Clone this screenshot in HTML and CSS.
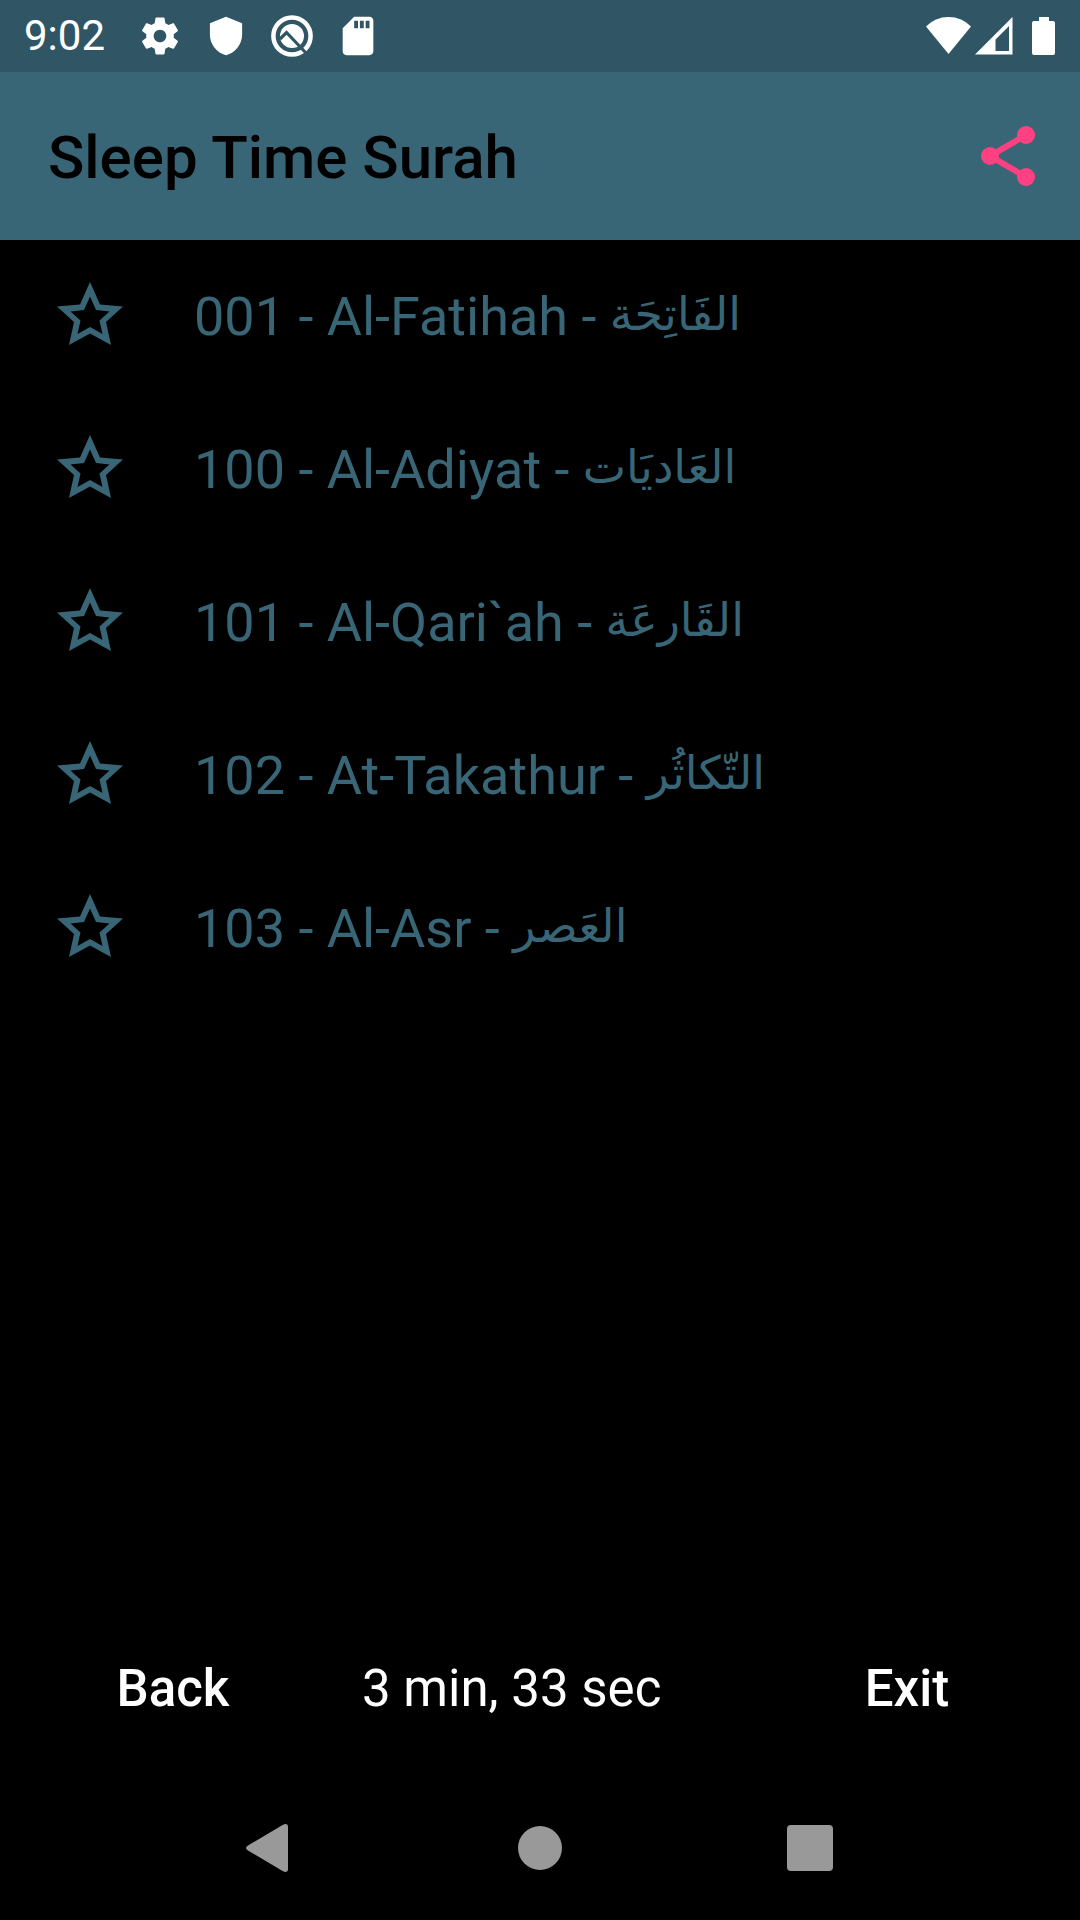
FILE: index.html
```html
<!DOCTYPE html>
<html lang="en">
<head>
<meta charset="utf-8">
<meta name="viewport" content="width=device-width, initial-scale=1">
<title>Sleep Time Surah</title>
<link rel="stylesheet" href="styles.css">
</head>
<body>
<svg class="defs" aria-hidden="true">
  <symbol id="star" viewBox="0 0 66 66"><path fill-rule="evenodd" d="M33 1L43 23.500L66 25.500L49 41L54 64L33 52.500L12 64L17 41L0 25.500L23 23.500ZM33 15.500L27 29L13.500 30.500L23.500 39.500L20.500 53L33 46L45.500 53L42.500 39.500L52.500 30.500L39 29Z"/></symbol>
</svg>
<div class="status">
  <span class="clock">9:02</span>
  <div class="notices">
    <svg viewBox="0 0 24 24"><path d="M19.140 12.940c.04-.3.06-.61.06-.94 0-.32-.02-.64-.07-.94l2.030-1.580c.18-.14.23-.41.12-.61l-1.920-3.320c-.12-.22-.37-.29-.59-.22l-2.390.96c-.5-.38-1.030-.7-1.620-.94l-.36-2.540c-.04-.24-.24-.41-.48-.41h-3.840c-.24 0-.43.17-.47.41l-.36 2.540c-.59.24-1.130.57-1.620.94l-2.390-.96c-.22-.08-.47 0-.59.22L2.740 8.870c-.12.21-.08.47.12.61l2.030 1.580c-.05.3-.09.63-.09.94s.02.64.07.94l-2.030 1.580c-.18.14-.23.41-.12.61l1.920 3.320c.12.22.37.29.59.22l2.390-.96c.5.38 1.030.7 1.620.94l.36 2.540c.05.24.24.41.48.41h3.840c.24 0 .44-.17.47-.41l.36-2.540c.59-.24 1.130-.56 1.620-.94l2.390.96c.22.08.47 0 .59-.22l1.920-3.320c.12-.22.07-.47-.12-.61l-2.010-1.580zM12 15.300c-1.820 0-3.300-1.480-3.300-3.300s1.480-3.300 3.300-3.300 3.300 1.480 3.300 3.300-1.480 3.300-3.300 3.300z"/></svg>
    <svg viewBox="0 0 24 24"><path d="M12 2L3.600 5.300v6c0 5 3.600 9.500 8.400 10.700 4.800-1.200 8.400-5.700 8.400-10.700v-6z"/></svg>
    <svg viewBox="0 0 46 46"><circle cx="23" cy="23" r="18.600" fill="none" stroke="#fff" stroke-width="4.500"/><circle cx="23" cy="23" r="12"/><path d="M11 26l6.500-6.500L37 40" fill="none" stroke="#305666" stroke-width="3.200"/></svg>
    <svg viewBox="0 0 24 24"><path d="M18 2h-8L4.020 8 4 20c0 1.100.9 2 2 2h12c1.100 0 2-.9 2-2V4c0-1.100-.9-2-2-2zm-6 6h-2V4h2v4zm3 0h-2V4h2v4zm3 0h-2V4h2v4z"/></svg>
  </div>
  <div class="signals">
    <svg class="wifi" viewBox="0 0 46 40"><path d="M0 10.500Q9 1 22.500 1T45 10.500L22.500 38z"/></svg>
    <svg class="cell" viewBox="0 0 38 40"><path fill-rule="evenodd" d="M0 38.500L37.500 1v37.500zM20.500 35H34V10L20.500 23.500z"/></svg>
    <svg class="battery" viewBox="0 0 24 40"><path d="M7 1h10v4h4q2 0 2 2v30q0 2-2 2H2q-2 0-2-2V7q0-2 2-2h5z"/></svg>
  </div>
</div>
<header class="appbar">
  <h1 class="title">Sleep Time Surah</h1>
  <button class="share" type="button" aria-label="Share"><svg viewBox="0 0 24 24"><circle cx="18" cy="5" r="3"/><circle cx="6" cy="12" r="3"/><circle cx="18" cy="19" r="3"/><path d="M18 5L6 12l12 7" fill="none" stroke="#ff4081" stroke-width="2"/></svg></button>
</header>
<main class="main">
  <ul class="list">
    <li class="row"><button class="fav" type="button" aria-label="Favourite Al-Fatihah"><svg><use href="#star"/></svg></button><span class="name">001 - Al-Fatihah - <span class="ar" lang="ar">الفَاتِحَة</span></span></li>
    <li class="row"><button class="fav" type="button" aria-label="Favourite Al-Adiyat"><svg><use href="#star"/></svg></button><span class="name">100 - Al-Adiyat - <span class="ar" lang="ar">العَاديَات</span></span></li>
    <li class="row"><button class="fav" type="button" aria-label="Favourite Al-Qari`ah"><svg><use href="#star"/></svg></button><span class="name">101 - Al-Qari`ah - <span class="ar" lang="ar">القَارعَة</span></span></li>
    <li class="row"><button class="fav" type="button" aria-label="Favourite At-Takathur"><svg><use href="#star"/></svg></button><span class="name">102 - At-Takathur - <span class="ar" lang="ar">التّكاثُر</span></span></li>
    <li class="row"><button class="fav" type="button" aria-label="Favourite Al-Asr"><svg><use href="#star"/></svg></button><span class="name">103 - Al-Asr - <span class="ar" lang="ar">العَصر</span></span></li>
  </ul>
</main>
<footer class="actions">
  <button class="action" type="button">Back</button>
  <span class="time">3 min, 33 sec</span>
  <button class="action" type="button">Exit</button>
</footer>
<nav class="sysnav" aria-label="System">
  <button type="button" aria-label="Back"><svg viewBox="0 0 48 48"><path d="M2 21.500L37 .8q5-2.300 5 2v42.400q0 4.300-5 2L2 26.500q-4-2.500 0-5z"/></svg></button>
  <button type="button" aria-label="Home"><svg viewBox="0 0 48 48"><circle cx="24" cy="24" r="22"/></svg></button>
  <button type="button" aria-label="Recent apps"><svg viewBox="0 0 48 48"><rect x="1" y="1" width="46" height="46" rx="4"/></svg></button>
</nav>
</body>
</html>
```
FILE: styles.css
```css
* { box-sizing: border-box; }

body {
  display: flex;
  flex-direction: column;
  min-height: 100vh;
  margin: 0;
  background: #000;
  font-family: Roboto, "DejaVu Sans", sans-serif;
}

button {
  padding: 0;
  border: 0;
  background: none;
  color: inherit;
  font: inherit;
  cursor: pointer;
}

svg { display: block; }

.defs {
  position: absolute;
  width: 0;
  height: 0;
}

.status {
  display: flex;
  align-items: center;
  height: 72px;
  padding: 0 24px;
  background: #305666;
  color: #fff;
  fill: #fff;
}

.clock {
  font-size: 42px;
  line-height: 72px;
}

.notices {
  display: flex;
  gap: 20px;
  margin-left: 32px;
}

.notices svg {
  width: 46px;
  height: 46px;
}

.signals {
  display: flex;
  gap: 3px;
  margin-left: auto;
}

.signals svg { height: 40px; }
.wifi { width: 46px; }
.cell { width: 38px; }
.battery { width: 24px; margin-left: 16px; }

.appbar {
  display: flex;
  align-items: center;
  justify-content: space-between;
  height: 168px;
  padding: 0 36px 0 48px;
  background: #386677;
}

.title {
  margin: 2px 0 0;
  font-size: 60px;
  font-weight: 500;
  color: #000;
}

.share svg {
  width: 72px;
  height: 72px;
  fill: #ff4081;
}

.main { flex: 1; }

.list {
  margin: 0;
  padding: 0;
  list-style: none;
}

.row {
  display: flex;
  align-items: center;
  gap: 70px;
  height: 153px;
  padding: 0 56px;
  color: #386677;
}

.fav {
  margin-bottom: 6px;
}

.fav svg {
  width: 68px;
  height: 66px;
  fill: #386677;
}

.name {
  font-size: 54px;
  line-height: 72px;
  white-space: nowrap;
}

.ar {
  font-size: 46px;
  line-height: 1;
  vertical-align: 5px;
}

.actions {
  display: grid;
  grid-template-columns: 264px 1fr 264px;
  align-items: center;
  height: 176px;
  padding: 0 41px;
  color: #fff;
  font-size: 51px;
}

.action {
  height: 144px;
  font-weight: 500;
}

.time { padding-left: 57px; }

.sysnav {
  display: grid;
  grid-template-columns: repeat(3, 1fr);
  justify-items: center;
  align-items: center;
  height: 144px;
  padding: 0 12.5%;
}

.sysnav svg {
  width: 48px;
  height: 48px;
  fill: #999;
}
```
